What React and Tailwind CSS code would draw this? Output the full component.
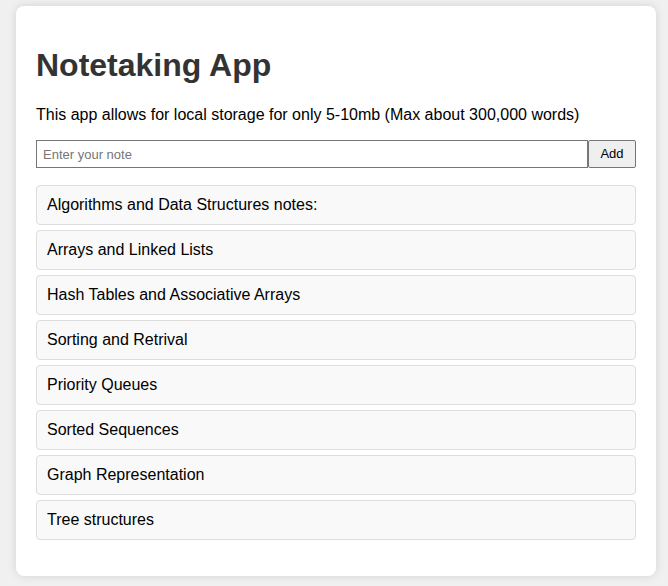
import React, { useState } from 'react'

const initialNotes = [
  'Algorithms and Data Structures notes:',
  'Arrays and Linked Lists',
  'Hash Tables and Associative Arrays',
  'Sorting and Retrival',
  'Priority Queues',
  'Sorted Sequences',
  'Graph Representation',
  'Tree structures'
]

function App() {
  const [notes, setNotes] = useState(initialNotes)
  const [text, setText] = useState('')

  const handleAdd = () => {
    if (!text.trim()) return
    setNotes([...notes, text.trim()])
    setText('')
  }

  return (
    <div className="min-h-screen bg-[#f0f0f0] pt-[6px] pb-[10px] pl-4 font-['Liberation_Sans',Arial,sans-serif] text-black">
      <div className="w-[640px] bg-white rounded-lg shadow-[0_0_10px_rgba(0,0,0,0.12)] px-5 py-5">
        <h1 className="text-[32px] leading-[37px] font-bold text-[#333] mt-[21px]">Notetaking App</h1>
        <p className="text-base leading-[18px] mt-[22px]">
          This app allows for local storage for only 5-10mb (Max about 300,000 words)
        </p>

        <div className="flex mt-4">
          <input
            type="text"
            placeholder="Enter your note"
            value={text}
            onChange={e => setText(e.target.value)}
            className="flex-1 h-[28px] px-[6px] border border-[#767676] text-[13px] placeholder:text-[#757575] outline-none"
          />
          <button
            onClick={handleAdd}
            className="h-[28px] w-[48px] border border-[#767676] rounded-[2px] bg-[#efefef] text-[13px] text-black"
          >
            Add
          </button>
        </div>

        {/* Notes list */}
        <ul className="mt-[17px] mb-4 flex flex-col gap-[5px]">
          {notes.map((note, idx) => (
            <li
              key={idx}
              className="h-[40px] px-[10px] flex items-center bg-[#f9f9f9] border border-[#ddd] rounded text-base"
            >
              {note}
            </li>
          ))}
        </ul>
      </div>
    </div>
  )
}

export default App
